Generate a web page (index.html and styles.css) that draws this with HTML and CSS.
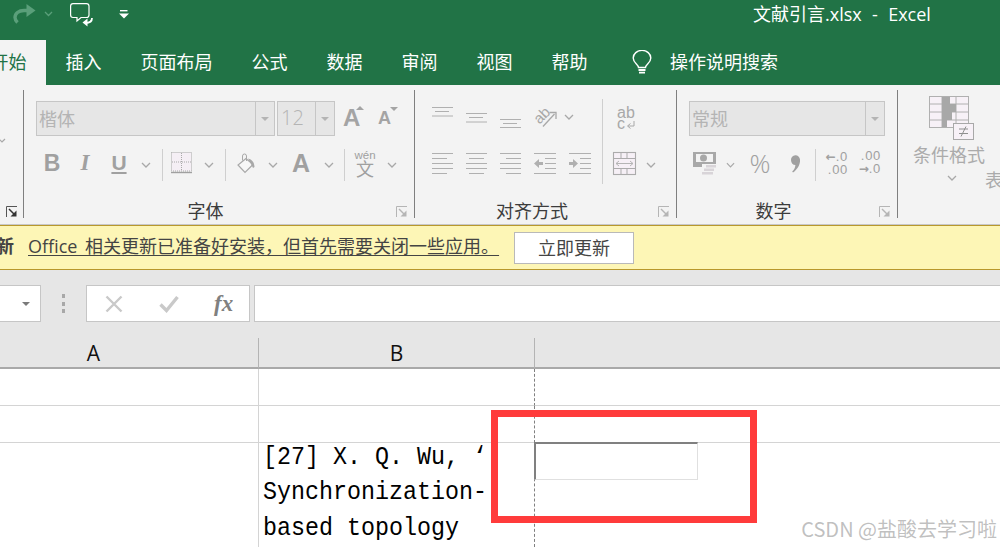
FILE: index.html
```html
<!DOCTYPE html>
<html lang="zh">
<head>
<meta charset="utf-8">
<title>文献引言.xlsx - Excel</title>
<link rel="stylesheet" href="styles.css">
</head>
<body>
<div class="app">
  <header class="titlebar">
    <div class="qat">
      <svg class="q-redo" width="24" height="20" viewBox="0 0 24 20"><path d="M18 6.500H12C6.500 6.500 3 9.500 3 13.500c0 2 1 3.500 2.500 5" fill="none" stroke="#5a9f7a" stroke-width="3.400"/><path d="M14.500 0l9 6.500-9 6.500z" fill="#5a9f7a"/></svg>
      <svg class="q-chev" width="9" height="6" viewBox="0 0 9 6"><path d="M1 1l3.500 3.500L8 1" fill="none" stroke="#5a9f7a" stroke-width="1.300"/></svg>
      <svg class="q-comment" width="24" height="24" viewBox="0 0 24 24"><path d="M3 .6h13.500A2.500 2.500 0 0 1 19 3v9a2.500 2.500 0 0 1-2.500 2.500H11L7 18v-3.500H3A2.500 2.500 0 0 1 .6 12V3A2.500 2.500 0 0 1 3 .6z" fill="none" stroke="#fff" stroke-width="1.200"/><path d="M22 15c0 4-3 5-6.500 5" fill="none" stroke="#fff" stroke-width="1.800"/><path d="M17.500 16l-5 4 5 4z" fill="#fff" transform="translate(0 -.5)"/></svg>
      <svg class="q-more" width="10" height="9" viewBox="0 0 10 9"><path d="M1 .7h7.500" stroke="#fff" stroke-width="1.400"/><path d="M0 3.500h10L5 8.500z" fill="#fff"/></svg>
    </div>
    <div class="doc-title">文献引言.xlsx &nbsp;-&nbsp; Excel</div>
  </header>

  <nav class="tabs">
    <div class="tab active">开始</div>
    <div class="tab">插入</div>
    <div class="tab">页面布局</div>
    <div class="tab">公式</div>
    <div class="tab">数据</div>
    <div class="tab">审阅</div>
    <div class="tab">视图</div>
    <div class="tab">帮助</div>
    <svg class="bulb" width="20" height="25" viewBox="0 0 20 25"><path d="M6.500 17.500c0-3-5.300-4.500-5.300-9.500a8.800 7.600 0 0 1 17.600 0c0 5-5.300 6.500-5.300 9.500z" fill="none" stroke="#fff" stroke-width="1.400"/><path d="M6.500 20h7M7 22.700h6" stroke="#fff" stroke-width="1.800"/></svg>
    <div class="tell">操作说明搜索</div>
  </nav>

  <section class="ribbon">
    <div class="group g-clip">
      <svg class="clip-chev" width="7" height="5" viewBox="0 0 7 5"><path d="M-1 1l3 3 3-3" fill="none" stroke="#a8a8a8" stroke-width="1.200"/></svg>
      <svg class="launch launch-dark" width="12" height="12" viewBox="0 0 12 12"><path d="M.5 11V.5H11" fill="none" stroke="#555" stroke-width="1"/><path d="M3 3l6 6" stroke="#333" stroke-width="1.500"/><path d="M4.500 10.500h6v-6z" fill="#333"/></svg>
    </div>

    <div class="group g-font">
      <div class="row-a">
        <div class="combo c-font"><span class="combo-val">楷体</span><span class="combo-drop"><i class="tri"></i></span></div>
        <div class="combo c-size"><span class="combo-val num">12</span><span class="combo-drop"><i class="tri"></i></span></div>
        <div class="grow-a"><span class="big-a">A</span><i class="tri-up"></i></div>
        <div class="shrink-a"><span class="small-a">A</span><i class="tri-dn"></i></div>
      </div>
      <div class="row-b">
        <span class="cell w32 fb">B</span>
        <span class="cell w34 fi">I</span>
        <span class="cell w34 fu">U</span>
        <span class="cell w20"><svg class="chev" width="10" height="6" viewBox="0 0 10 6"><path d="M1 1l4 4 4-4"/></svg></span>
        <i class="vsep s6"></i>
        <span class="cell w38"><svg width="22" height="22" viewBox="0 0 22 22"><rect x=".5" y=".5" width="20" height="18.500" fill="#f5eff5" stroke="#a9a9a9" stroke-dasharray="1 1"/><path d="M10.500 1v18M1 10h20" stroke="#a9a9a9" stroke-dasharray="1 1"/><path d="M0 20.500h21" stroke="#a0a0a0" stroke-width="1.400"/></svg></span>
        <span class="cell w16"><svg class="chev" width="10" height="6" viewBox="0 0 10 6"><path d="M1 1l4 4 4-4"/></svg></span>
        <i class="vsep s8"></i>
        <span class="cell w42"><svg width="20" height="21" viewBox="0 0 20 21"><path d="M9 5.500L1 12l7 7.500 8-8z" fill="#f7f7f7" stroke="#a8a8a8" stroke-width="1.200"/><path d="M5.500 7.500V3a2 2 0 0 1 4 0v5" fill="none" stroke="#a8a8a8"/><path d="M11 5.500c4 1 6.500 4 6.500 8.500l-1.500 1-2-4z" fill="#a8a8a8"/></svg></span>
        <span class="cell w10"><svg class="chev" width="10" height="6" viewBox="0 0 10 6"><path d="M1 1l4 4 4-4"/></svg></span>
        <span class="cell w46 fa">A</span>
        <span class="cell w10"><svg class="chev" width="10" height="6" viewBox="0 0 10 6"><path d="M1 1l4 4 4-4"/></svg></span>
        <i class="vsep s10"></i>
        <span class="cell w40 wen"><span class="wen-a">wén</span><span class="wen-b">文</span></span>
        <span class="cell w14"><svg class="chev" width="10" height="6" viewBox="0 0 10 6"><path d="M1 1l4 4 4-4"/></svg></span>
      </div>
      <div class="glabel">字体</div>
      <svg class="launch" width="12" height="12" viewBox="0 0 12 12"><path d="M.5 11V.5H11" fill="none" stroke="#b5b5b5"/><path d="M3 3l6 6" stroke="#b5b5b5" stroke-width="1.400"/><path d="M4.500 10.500h6v-6z" fill="#b5b5b5"/></svg>
    </div>

    <div class="group g-align">
      <div class="align-body">
        <div class="align-left">
          <div class="align-row">
            <svg width="21" height="21" viewBox="0 0 21 21" class="ln"><path d="M0 .5h21M3 4.500h14M0 9h21"/></svg>
            <svg width="21" height="21" viewBox="0 0 21 21" class="ln"><path d="M0 6.500h21M3 10.500h14M0 15h21"/></svg>
            <svg width="21" height="21" viewBox="0 0 21 21" class="ln"><path d="M0 12.500h21M3 16.500h14M0 20.500h21"/></svg>
            <svg class="vis" width="41" height="24" viewBox="0 0 41 24"><text x="1" y="15" class="ab-rot" transform="rotate(-45 9 12)">ab</text><path d="M9 21.500L20.500 9" stroke="#a8a8a8" stroke-width="1.300"/><path d="M15.500 7.500h6.500v6.500" fill="none" stroke="#a8a8a8" stroke-width="1.300"/><path d="M31 10l4 4 4-4" fill="none" stroke="#a8a8a8" stroke-width="1.300"/></svg>
          </div>
          <div class="align-row">
            <svg width="21" height="21" viewBox="0 0 21 21" class="ln"><path d="M0 .5h21M0 5.500h15M0 10.500h21M0 15.500h21M0 20.500h15"/></svg>
            <svg width="21" height="21" viewBox="0 0 21 21" class="ln"><path d="M0 .5h21M3 5.500h15M0 10.500h21M0 15.500h21M3 20.500h15"/></svg>
            <svg width="21" height="21" viewBox="0 0 21 21" class="ln"><path d="M0 .5h21M6 5.500h15M0 10.500h21M0 15.500h21M6 20.500h15"/></svg>
            <svg width="22" height="21" viewBox="0 0 22 21" class="ln"><path d="M0 .5h22M11 5.500h11M11 10.500h11M11 15.500h11M0 20.500h22"/><path d="M0 10.500l5-4.500v3h4v3H5v3z" class="ln-fill"/></svg>
            <svg width="22" height="21" viewBox="0 0 22 21" class="ln"><path d="M0 .5h22M11 5.500h11M11 10.500h11M11 15.500h11M0 20.500h22"/><path d="M9 10.500L4 6v3H0v3h4v3z" class="ln-fill"/></svg>
          </div>
        </div>
        <i class="vsep-tall"></i>
        <div class="align-right">
          <div class="wrap-ic"><span class="wrap-a">ab</span><span class="wrap-c">c<svg width="9" height="9" viewBox="0 0 9 9"><path d="M8 1v5H2" fill="none" stroke="#a8a8a8"/><path d="M4.500 3.500L1.500 6l3 2.500" fill="none" stroke="#a8a8a8"/></svg></span></div>
          <svg class="vis" width="42" height="23" viewBox="0 0 42 23"><rect x=".5" y=".5" width="22" height="22" fill="#f6f0f6" stroke="#ababab" stroke-width="1.100"/><path d="M0 6.500h23M0 16.500h23M8 0v6.500M14 0v6.500M8 16.500V23M14 16.500V23" stroke="#ababab"/><path d="M3 11.500h17M6 9l-3 2.500L6 14M17 9l3 2.500L17 14" fill="none" stroke="#b5b5b5"/><path d="M34 11l4 4 4-4" fill="none" stroke="#a8a8a8" stroke-width="1.300"/></svg>
        </div>
      </div>
      <div class="glabel">对齐方式</div>
      <svg class="launch" width="12" height="12" viewBox="0 0 12 12"><path d="M.5 11V.5H11" fill="none" stroke="#b5b5b5"/><path d="M3 3l6 6" stroke="#b5b5b5" stroke-width="1.400"/><path d="M4.500 10.500h6v-6z" fill="#b5b5b5"/></svg>
    </div>

    <div class="group g-num">
      <div class="row-a">
        <div class="combo c-num"><span class="combo-val">常规</span><span class="combo-drop"><i class="tri"></i></span></div>
      </div>
      <div class="row-b">
        <span class="cell w32"><svg width="24" height="24" viewBox="0 0 24 24"><path d="M0 1h23v12H13v3H0z" fill="#a8a8a8"/><rect x="3" y="3" width="17" height="8" fill="#f3f3f3"/><circle cx="10.500" cy="7" r="3.500" fill="#a8a8a8"/><rect x="9" y="13" width="14" height="3" fill="#f3f3f3"/><path d="M13 14h10v2.500H13zM11 17.500h10V20H11zM9 21h11v2.500H9z" fill="#d8d4d8"/></svg></span>
        <span class="cell w18"><svg class="chev" width="9" height="6" viewBox="0 0 10 6"><path d="M1 1l4 4 4-4"/></svg></span>
        <span class="cell w42 pct">%</span>
        <span class="cell w28"><svg width="11" height="19" viewBox="0 0 11 19"><path d="M1 6a4.500 4.500 0 0 1 9-.5c.5 5-3 10.500-7 13l-.8-1c1.800-1.500 3-3.500 3.200-6.500C3 11 1 9 1 6z" fill="#a0a0a0"/></svg></span>
        <i class="vsep s6"></i>
        <span class="cell w33 dec"><span class="dec-l"><b>←</b>.0</span><span class="dec-l">.00</span></span>
        <span class="cell w33 dec"><span class="dec-l">.00</span><span class="dec-l"><b>→</b>.0</span></span>
      </div>
      <div class="glabel">数字</div>
      <svg class="launch" width="12" height="12" viewBox="0 0 12 12"><path d="M.5 11V.5H11" fill="none" stroke="#b5b5b5"/><path d="M3 3l6 6" stroke="#b5b5b5" stroke-width="1.400"/><path d="M4.500 10.500h6v-6z" fill="#b5b5b5"/></svg>
    </div>

    <div class="group g-style">
      <div class="style-btn">
        <svg width="45" height="44" viewBox="0 0 45 44"><rect x=".5" y=".5" width="39" height="31" fill="#f7f1f7" stroke="#b0b0b0"/><path d="M0 8h40M0 16h40M0 24h40M13 0v32M27 0v32" stroke="#b0b0b0"/><path d="M13 1h8v7h-8zM13 8h14v8H13zM13 16h10v8H13zM13 24h5v7h-5z" fill="#a8a8a8"/><rect x="24.500" y="27.500" width="20" height="16" fill="#f7f1f7" stroke="#a8a8a8"/><path d="M30 33h9M30 37.500h9M37 30.500l-5 10" stroke="#8f8f8f"/></svg>
        <span class="style-t">条件格式</span>
        <svg class="chev" width="10" height="6" viewBox="0 0 10 6"><path d="M1 1l4 4 4-4"/></svg>
      </div>
      <span class="style-t next">表</span>
    </div>
  </section>

  <section class="notice">
    <b class="n-tag">新</b>
    <a class="n-link">Office 相关更新已准备好安装，但首先需要关闭一些应用。</a>
    <button class="n-btn">立即更新</button>
  </section>

  <section class="formula">
    <div class="namebox"><i class="tri dark"></i></div>
    <div class="dots"><i></i><i></i><i></i></div>
    <div class="fbtns">
      <svg width="18" height="18" viewBox="0 0 18 18"><path d="M1.500 1.500l15 15M16.500 1.500l-15 15" stroke="#c9c9c9" stroke-width="2.400"/></svg>
      <svg width="20" height="18" viewBox="0 0 20 18"><path d="M1.500 9.500l6 6L18.500 2" fill="none" stroke="#c9c9c9" stroke-width="3.400"/></svg>
      <span class="fx">fx</span>
    </div>
    <div class="finput"></div>
  </section>

  <section class="sheet">
    <div class="hd hd-a">A</div>
    <div class="hd hd-b">B</div>
    <div class="hd"></div>
    <div class="c ca"></div><div class="c cb"></div><div class="c"></div>
    <div class="c ca"></div><div class="c cb"></div><div class="c"></div>
    <div class="c ca last"></div>
    <div class="c cb last mono"><div class="mono-in">[27] X. Q. Wu, ‘<br>Synchronization-<br>based topology</div></div>
    <div class="c last"><div class="editor"></div></div>
  </section>

  <div class="redbox"></div>
  <div class="mark">CSDN @盐酸去学习啦</div>
</div>
</body>
</html>
```

FILE: styles.css
```css
* { box-sizing: border-box; }
html, body { margin: 0; padding: 0; }
body { width: 1000px; height: 547px; overflow: hidden; background: #fff; font-family: "Open Sans", "Noto Sans CJK SC", sans-serif; }
.app { position: relative; width: 1000px; height: 547px; overflow: hidden; display: flex; flex-direction: column; }
.app > * { flex: none; }

.titlebar { height: 40px; background: #217346; display: flex; justify-content: space-between; align-items: flex-start; color: #fff; }
.qat { display: flex; align-items: flex-start; padding-left: 12px; }
.q-redo { margin-top: 4px; }
.q-chev { margin: 11px 0 0 8px; }
.q-comment { margin: 3px 0 0 17px; }
.q-more { margin: 10px 0 0 25px; }
.doc-title { width: 247px; font-size: 18px; line-height: 28px; word-spacing: .5px; white-space: nowrap; }

.tabs { height: 45px; background: #217346; display: flex; align-items: center; color: #fff; font-size: 18px; }
.tab { padding: 0 19.5px; height: 45px; line-height: 45px; white-space: nowrap; }
.tab.active { background: #f3f3f3; color: #217346; margin-left: -29px; }
.bulb { margin-left: 25px; }
.tell { margin-left: 18px; line-height: 45px; height: 45px; }

.ribbon { height: 140px; background: #f3f3f3; display: flex; padding-top: 5px; border-bottom: 1.500px solid #c8c8c8; }
.group { position: relative; height: 128px; border-right: 1.500px solid #7f7f7f; flex: none; }
.g-clip { width: 24px; }
.clip-chev { position: absolute; left: 0; top: 48px; }
.launch { position: absolute; right: 6px; bottom: 0; }
.launch-dark { right: 5px; }
.g-font { width: 391px; padding: 11px 0 0 12px; }
.g-align { width: 262px; padding-top: 9px; }
.g-num { width: 221px; padding: 11px 0 0 12px; }
.g-style { flex: 1; border-right: 0; display: flex; overflow: hidden; }

.row-a { display: flex; height: 35px; align-items: center; }
.row-b { display: flex; height: 32px; margin-top: 13px; align-items: center; }
.combo { height: 35px; background: #e6e6e6; border: 1.500px solid #c6c6c6; display: flex; color: #b4b4b4; font-size: 18px; line-height: 34px; }
.combo-val { flex: 1; padding-left: 2px; }
.combo-val.num { font-weight: 300; font-size: 20px; padding-left: 3px; line-height: 32px; }
.combo-drop { width: 19px; border-left: 1.500px solid #c6c6c6; display: flex; align-items: center; justify-content: center; }
.tri { width: 0; height: 0; border-left: 4px solid transparent; border-right: 4px solid transparent; border-top: 4px solid #b4b4b4; }
.tri.dark { border-top-color: #7a7a7a; }
.c-font { width: 239px; }
.c-size { width: 58px; margin-left: 2px; }
.c-num { width: 196px; }
.grow-a, .shrink-a { position: relative; color: #a4a4a4; font-family: "Liberation Sans", sans-serif; font-weight: 700; line-height: 35px; }
.grow-a { margin-left: 8px; width: 35px; }
.shrink-a { width: 20px; }
.big-a { font-size: 24px; }
.small-a { font-size: 18px; }
.tri-up { position: absolute; left: 13px; top: 6px; width: 0; height: 0; border-left: 4px solid transparent; border-right: 4px solid transparent; border-bottom: 4px solid #a4a4a4; }
.tri-dn { position: absolute; left: 12px; top: 6px; width: 0; height: 0; border-left: 4px solid transparent; border-right: 4px solid transparent; border-top: 4px solid #a4a4a4; }

.cell { display: flex; align-items: center; justify-content: center; height: 32px; padding-bottom: 4px; flex: none; color: #a0a0a0; }
.w10 { width: 10px; } .w14 { width: 14px; } .w16 { width: 16px; } .w18 { width: 18px; } .w20 { width: 20px; }
.w28 { width: 28px; } .w32 { width: 32px; } .w33 { width: 33px; } .w34 { width: 34px; } .w38 { width: 38px; }
.w40 { width: 40px; } .w42 { width: 42px; } .w46 { width: 46px; }
.fb { font: 700 23px "Liberation Sans", sans-serif; }
.fi { font: italic 700 23px "Liberation Serif", serif; }
.fu { font: 700 21px "Liberation Sans", sans-serif; text-decoration: underline; text-underline-offset: 2px; }
.fa { font: 700 25px "Liberation Sans", sans-serif; }
.chev { fill: none; stroke: #a8a8a8; stroke-width: 1.300; margin-top: 4px; }
.vsep { width: 1px; height: 32px; background: #cfcfcf; flex: none; }
.s6 { margin-left: 6px; } .s8 { margin-left: 8px; } .s10 { margin-left: 10px; }
.wen { flex-direction: column; line-height: 1; }
.wen-a { font: 11.500px "Liberation Sans", sans-serif; }
.wen-b { font-size: 18px; line-height: 17px; }

.glabel { position: absolute; left: 0; right: 27px; top: 110px; height: 22px; text-align: center; font-size: 18px; line-height: 22px; color: #3c3c3c; }

.align-body { display: flex; height: 85px; }
.align-left { width: 187px; padding-left: 17px; display: flex; flex-direction: column; gap: 10px; }
.align-row { display: flex; height: 36px; gap: 13px; align-items: center; }
.ln { fill: none; stroke: #b0b0b0; stroke-width: 1; }
.ln-fill { fill: #b0b0b0; stroke: none; }
.vis { overflow: visible; }
.ab-rot { font: 15px "Liberation Sans", sans-serif; fill: #a8a8a8; }
.vsep-tall { width: 1px; height: 85px; background: #cfcfcf; flex: none; }
.align-right { flex: 1; padding: 8px 0 0 10px; display: flex; flex-direction: column; gap: 23px; align-items: flex-start; }
.wrap-ic { margin-left: 4px; width: 20px; height: 22px; display: flex; flex-direction: column; color: #a8a8a8; font: 16px/11px "Liberation Sans", sans-serif; }
.wrap-a, .wrap-c { display: flex; align-items: center; height: 11px; }
.wrap-c svg { margin: 1px 0 0 1px; }

.pct { font: 300 26px "Open Sans", sans-serif; }
.dec { flex-direction: column; font: 13px/12px "Liberation Sans", sans-serif; letter-spacing: .7px; align-items: flex-end; padding: 0 1px 4px 0; }
.dec b { font: 700 12px "DejaVu Sans", sans-serif; letter-spacing: 0; }

.style-btn { width: 96px; padding-top: 6px; padding-left: 31px; display: flex; flex-direction: column; align-items: flex-start; }
.style-t { color: #ababab; font-size: 18px; line-height: 22px; white-space: nowrap; }
.style-btn .style-t { margin: 4px 0 9px -16px; }
.style-btn .chev { margin: 0 0 0 18px; }
.next { margin-top: 79px; }

.notice { height: 45px; background: #fdf6b6; border-top: 1px solid #b8982c; border-bottom: 1px solid #b8982c; display: flex; align-items: center; font-size: 18px; color: #444; }
.n-tag { margin: 0 0 3px -4px; width: 18px; font-weight: 700; line-height: 26px; }
.n-link { margin: 0 0 3px 14px; width: 470px; line-height: 26px; white-space: nowrap; word-spacing: 3px; text-decoration: underline; text-underline-offset: 2px; }
.n-btn { margin-left: 16px; width: 120px; height: 32px; background: #fff; border: 1px solid #b9b9b9; font: inherit; color: #444; padding: 0 0 2px; }

.formula { height: 68px; background: #e6e6e6; display: flex; padding-top: 15px; align-items: flex-start; }
.namebox { width: 41px; height: 37px; background: #fff; border: 1.500px solid #c6c6c6; border-left: 0; display: flex; align-items: center; padding-left: 22px; }
.dots { width: 45px; height: 37px; display: flex; flex-direction: column; align-items: center; justify-content: center; gap: 3.500px; }
.dots i { width: 3px; height: 4px; background: #a8a8a8; display: block; }
.fbtns { width: 164px; height: 37px; background: #fff; border: 1.500px solid #c6c6c6; display: flex; align-items: center; padding-left: 18px; }
.fbtns svg:nth-child(2) { margin-left: 36px; }
.fx { margin-left: 35px; font: italic 700 23px "Liberation Serif", serif; color: #808080; }
.finput { flex: 1; margin-left: 4px; height: 37px; background: #fff; border: 1.500px solid #c6c6c6; border-right: 0; }

.sheet { flex: 1 !important; min-height: 0; display: grid; grid-template-columns: 259px 276px 1fr; grid-template-rows: 31px 37px 37px 1fr; background: #fff; }
.hd { background: #e6e6e6; border-bottom: 2px solid #a9a9a9; font: 21px/31px "Open Sans", sans-serif; color: #111; text-align: center; }
.hd-a { border-right: 1px solid #b4b4b4; padding-right: 71px; }
.hd-b { border-right: 1px solid #b4b4b4; }
.c { border-bottom: 1px solid #d4d4d4; }
.ca { border-right: 1px solid #d4d4d4; }
.cb { border-right: 1px dashed #808080; }
.last { border-bottom: 0; }
.mono { overflow: hidden; }
.mono-in { font: 26px/35.500px "Liberation Mono", monospace; color: #000; margin: -3.500px 0 0 4px; white-space: nowrap; transform: scaleX(.897); transform-origin: 0 0; }
.editor { width: 164px; height: 38px; margin: -1px 0 0 -1px; border-top: 2px solid #808080; border-left: 2px solid #808080; border-right: 1px solid #e0e0e0; border-bottom: 1px solid #e0e0e0; background: #fff; }

.redbox { position: absolute !important; left: 491px; top: 410px; width: 266px; height: 113px; border: 7px solid #ff3b3b; }
.mark { position: absolute !important; right: 3px; top: 516px; font-family: "Noto Sans CJK SC", sans-serif; font-size: 20px; line-height: 26px; color: rgba(150, 150, 150, .6); white-space: nowrap; }
```
